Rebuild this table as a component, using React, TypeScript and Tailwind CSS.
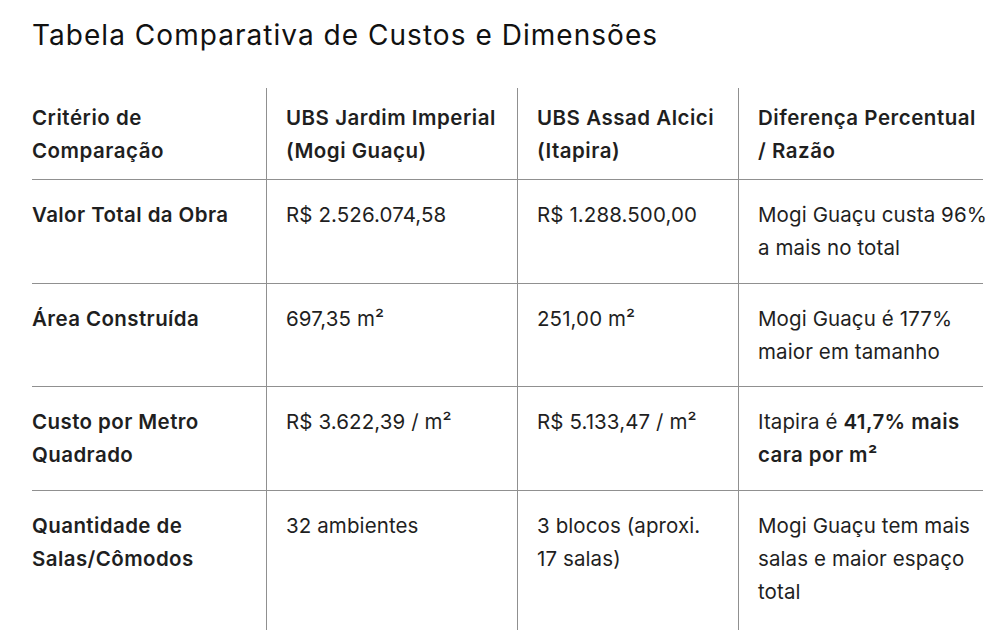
const rows: { label: string; a: string; b: string; diff: React.ReactNode }[] = [
  {
    label: 'Valor Total da Obra',
    a: 'R$ 2.526.074,58',
    b: 'R$ 1.288.500,00',
    diff: 'Mogi Guaçu custa 96% a mais no total',
  },
  {
    label: 'Área Construída',
    a: '697,35 m²',
    b: '251,00 m²',
    diff: 'Mogi Guaçu é 177% maior em tamanho',
  },
  {
    label: 'Custo por Metro Quadrado',
    a: 'R$ 3.622,39 / m²',
    b: 'R$ 5.133,47 / m²',
    diff: (
      <>
        Itapira é <strong className="font-semibold tracking-[0.02em]">41,7% mais cara por m²</strong>
      </>
    ),
  },
  {
    label: 'Quantidade de Salas/Cômodos',
    a: '32 ambientes',
    b: '3 blocos (aproxi. 17 salas)',
    diff: 'Mogi Guaçu tem mais salas e maior espaço total',
  },
];

const headers = [
  'Critério de Comparação',
  'UBS Jardim Imperial (Mogi Guaçu)',
  'UBS Assad Alcici (Itapira)',
  'Diferença Percentual / Razão',
];

// padding per column: first has no left pad, last has no right pad
const colPad = [
  'pr-[19px]',
  'pl-[19px] pr-[19px] border-l-[1.5px]',
  'pl-[19px] pr-[19px] border-l-[1.5px]',
  'pl-[19px] border-l-[1.5px]',
];

export default function App() {
  return (
    <div className="h-[630px] overflow-hidden bg-white px-8 pt-[17px] text-[#1f1f1f] font-['Inter',sans-serif]">
      <h1 className="mb-[35px] text-[28px] leading-[36px] font-normal tracking-[0.037em] text-[#111]">
        Tabela Comparativa de Custos e Dimensões
      </h1>

      <div className="grid w-[951px] grid-cols-[234px_251px_221px_245px] text-[20.5px] leading-[33px]">
        {headers.map((h, i) => (
          <div
            key={h}
            className={`border-b-[1.5px] border-[#909090] pt-[13px] pb-[12px] font-semibold tracking-[0.025em] ${colPad[i]}`}
          >
            {h}
          </div>
        ))}

        {rows.map((r, ri) => {
          const last = ri === rows.length - 1;
          const cells = [r.label, r.a, r.b, r.diff];
          return cells.map((c, i) => (
            <div
              key={`${ri}-${i}`}
              className={`border-[#909090] pt-[18px] ${last ? 'pb-[30px]' : 'pb-[18.5px] border-b-[1.5px]'} ${colPad[i]} ${
                i === 0 ? 'font-semibold tracking-[0.02em]' : 'tracking-[0.005em]'
              }`}
            >
              {/* last column text runs right up to the rule's end */}
              {i === 3 ? <div className="-mr-[8px]">{c}</div> : c}
            </div>
          ));
        })}
      </div>
    </div>
  );
}
